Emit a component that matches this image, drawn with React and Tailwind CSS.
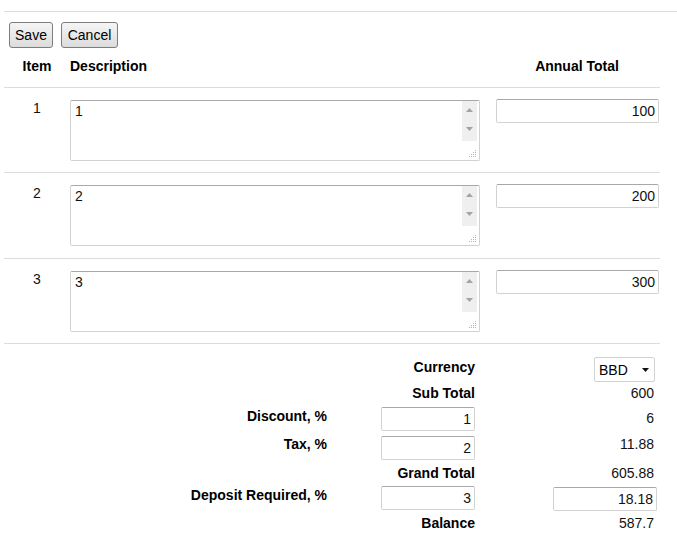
import React from "react";

const rows = [
  { item: "1", desc: "1", total: "100", pb: "pb-[11px]" },
  { item: "2", desc: "2", total: "200", pb: "pb-[12px]" },
  { item: "3", desc: "3", total: "300", pb: "pb-[11px]" },
];

const inputCls =
  "h-[24px] border border-[#d2d2d2] border-t-[#a8a8a8] rounded-[2px] bg-white pl-[4px] pr-[3px] text-right text-[14px] leading-[16px] text-[#111] outline-none";

function Btn({ w, children }) {
  return (
    <button
      type="button"
      className={`${w} h-[26px] rounded-[3px] border border-[#7d7d7d] bg-linear-to-b from-[#f5f5f5] to-[#dcdcdc] text-[14px] leading-[16px] text-black`}
    >
      {children}
    </button>
  );
}

// fake old-style textarea: text area + scrollbar strip + resize grip
function TextBox({ value }) {
  return (
    <div className="flex w-[410px] h-[61px] border border-[#d2d2d2] border-t-[#a8a8a8] rounded-[2px] bg-white">
      <textarea
        defaultValue={value}
        className="flex-1 resize-none bg-transparent pl-[4px] pt-[2px] text-[14px] leading-[16px] text-[#111] outline-none overflow-hidden"
      />
      <div className="flex flex-col w-[15px] mr-[2px]">
        <div className="h-[40px] bg-[#efefef] flex flex-col items-center">
          <svg width="7" height="4" viewBox="0 0 7 4" className="mt-[7px]">
            <path d="M3.5 0 L7 4 L0 4 Z" fill="#a3a3a3" />
          </svg>
          <svg width="7" height="4" viewBox="0 0 7 4" className="mt-[15px]">
            <path d="M0 0 L7 0 L3.5 4 Z" fill="#a3a3a3" />
          </svg>
        </div>
        <div className="flex-1" />
        <svg width="8" height="7" viewBox="0 0 8 7" className="self-end mb-[3px]">
          <rect x="6" y="0" width="1" height="1" fill="#b4b4b4" />
          <rect x="4" y="2" width="1" height="1" fill="#b4b4b4" />
          <rect x="6" y="2" width="1" height="1" fill="#b4b4b4" />
          <rect x="2" y="4" width="1" height="1" fill="#b4b4b4" />
          <rect x="4" y="4" width="1" height="1" fill="#b4b4b4" />
          <rect x="6" y="4" width="1" height="1" fill="#b4b4b4" />
          <rect x="0" y="6" width="1" height="1" fill="#b4b4b4" />
          <rect x="2" y="6" width="1" height="1" fill="#b4b4b4" />
          <rect x="4" y="6" width="1" height="1" fill="#b4b4b4" />
          <rect x="6" y="6" width="1" height="1" fill="#b4b4b4" />
        </svg>
      </div>
    </div>
  );
}

const sumGrid = "grid grid-cols-[323px_54px_94px_182px] items-start";

export default function App() {
  return (
    <div className="w-[677px] h-[553px] bg-white font-['Liberation_Sans',Arial,sans-serif] text-[14px] leading-[16px] text-black">
      <div className="pt-[11px] pl-[4px]">
        <div className="border-t border-[#dcdcdc]" />
        <div className="flex gap-[8px] pl-[5px] mt-[10px]">
          <Btn w="w-[44px]">Save</Btn>
          <Btn w="w-[57px]">Cancel</Btn>
        </div>

        <div className="w-[656px]">
          <div className="flex h-[40px] pt-[10px] border-b border-[#dcdcdc] font-bold">
            <div className="w-[66px] text-center">Item</div>
            <div className="w-[426px]">Description</div>
            <div className="w-[162px] text-center">Annual Total</div>
          </div>

          {rows.map((r) => (
            <div key={r.item} className={`flex pt-[12px] ${r.pb} border-b border-[#dcdcdc]`}>
              <div className="w-[66px] text-center text-[#111]">{r.item}</div>
              <div className="w-[426px]">
                <TextBox value={r.desc} />
              </div>
              <div className="w-[162px] -mt-[1px]">
                <input defaultValue={r.total} className={`${inputCls} w-[163px]`} />
              </div>
            </div>
          ))}
        </div>

        {/* totals */}
        <div className="font-bold">
          <div className={`${sumGrid} h-[39px]`}>
            <div />
            <div />
            <div className="text-right mt-[15px]">Currency</div>
            <div className="flex justify-end mt-[13px] pr-[2px]">
              <div className="w-[61px] h-[25px] border border-[#d2d2d2] rounded-[2px] flex items-center justify-between pl-[4px] pr-[5px] font-normal">
                <span>BBD</span>
                <svg width="7" height="4" viewBox="0 0 7 4">
                  <path d="M0 0 L7 0 L3.5 4 Z" fill="#111" />
                </svg>
              </div>
            </div>
          </div>

          <div className={`${sumGrid} h-[22px]`}>
            <div />
            <div />
            <div className="text-right mt-[2px]">Sub Total</div>
            <div className="text-right mt-[2px] pr-[3px] font-normal text-[#111]">600</div>
          </div>

          <div className={`${sumGrid} h-[29px]`}>
            <div className="text-right mt-[3px]">Discount, %</div>
            <div />
            <input defaultValue="1" className={`${inputCls} w-[94px] mt-[2px] font-normal`} />
            <div className="text-right mt-[5px] pr-[3px] font-normal text-[#111]">6</div>
          </div>

          <div className={`${sumGrid} h-[29px]`}>
            <div className="text-right mt-[2px]">Tax, %</div>
            <div />
            <input defaultValue="2" className={`${inputCls} w-[94px] mt-[2px] font-normal`} />
            <div className="text-right mt-[2px] pr-[3px] font-normal text-[#111]">11.88</div>
          </div>

          <div className={`${sumGrid} h-[21px]`}>
            <div />
            <div />
            <div className="text-right mt-[2px]">Grand Total</div>
            <div className="text-right mt-[2px] pr-[3px] font-normal text-[#111]">605.88</div>
          </div>

          <div className={`${sumGrid} h-[27px]`}>
            <div className="text-right mt-[3px]">Deposit Required, %</div>
            <div />
            <input defaultValue="3" className={`${inputCls} w-[94px] mt-[2px] font-normal`} />
            <div className="flex justify-end mt-[3px]">
              <input defaultValue="18.18" className={`${inputCls} w-[104px] font-normal`} />
            </div>
          </div>

          <div className={`${sumGrid} h-[24px]`}>
            <div />
            <div />
            <div className="text-right mt-[4px]">Balance</div>
            <div className="text-right mt-[4px] pr-[3px] font-normal text-[#111]">587.7</div>
          </div>
        </div>
      </div>
    </div>
  );
}
